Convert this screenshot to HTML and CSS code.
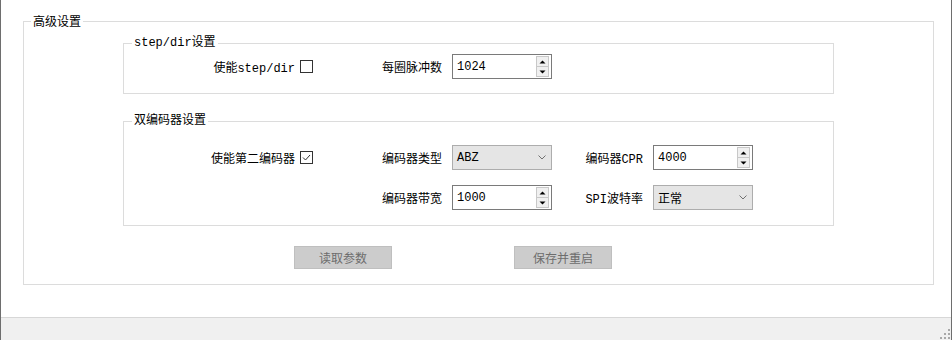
FILE: index.html
```html
<!DOCTYPE html>
<html lang="zh-CN">
<head>
  <meta charset="UTF-8">
  <meta name="viewport" content="width=device-width, initial-scale=1.0">
  <title>高级设置</title>
  <link rel="stylesheet" href="styles.css">
</head>
<body>
  <div class="window">
    <div class="main">
      <fieldset class="group outer">
        <legend>高级设置</legend>
        <div class="outer-body">

          <fieldset class="group sub sub-step">
            <legend>step/dir设置</legend>
            <div class="grid">
              <label class="lbl">使能step/dir</label>
              <div class="cell-check"><span class="check"></span></div>
              <label class="lbl">每圈脉冲数</label>
              <div class="cell-field">
                <div class="spin">
                  <span class="val">1024</span>
                  <span class="spin-btns">
                    <span class="sbtn"><svg width="7" height="4" viewBox="0 0 7 4"><path d="M3.5 0.5 L6.5 3.5 L0.5 3.5 Z" fill="#000"/></svg></span>
                    <span class="sbtn"><svg width="7" height="4" viewBox="0 0 7 4"><path d="M0.5 0.5 L6.5 0.5 L3.5 3.5 Z" fill="#000"/></svg></span>
                  </span>
                </div>
              </div>
            </div>
          </fieldset>

          <fieldset class="group sub sub-enc">
            <legend>双编码器设置</legend>
            <div class="grid">
              <label class="lbl">使能第二编码器</label>
              <div class="cell-check">
                <span class="check">
                  <svg width="11" height="11" viewBox="0 0 11 11"><path d="M2 5.5 L4.5 8 L9 3" fill="none" stroke="#333" stroke-width="1"/></svg>
                </span>
              </div>
              <label class="lbl">编码器类型</label>
              <div class="cell-field">
                <div class="combo"><span class="val">ABZ</span>
                  <svg class="chev" width="8" height="5" viewBox="0 0 8 5"><path d="M0.5 0.5 L4 4 L7.5 0.5" fill="none" stroke="#707070" stroke-width="1"/></svg>
                </div>
              </div>
              <label class="lbl">编码器CPR</label>
              <div class="cell-field">
                <div class="spin">
                  <span class="val">4000</span>
                  <span class="spin-btns">
                    <span class="sbtn"><svg width="7" height="4" viewBox="0 0 7 4"><path d="M3.5 0.5 L6.5 3.5 L0.5 3.5 Z" fill="#000"/></svg></span>
                    <span class="sbtn"><svg width="7" height="4" viewBox="0 0 7 4"><path d="M0.5 0.5 L6.5 0.5 L3.5 3.5 Z" fill="#000"/></svg></span>
                  </span>
                </div>
              </div>

              <label class="lbl col-3">编码器带宽</label>
              <div class="cell-field">
                <div class="spin">
                  <span class="val">1000</span>
                  <span class="spin-btns">
                    <span class="sbtn"><svg width="7" height="4" viewBox="0 0 7 4"><path d="M3.5 0.5 L6.5 3.5 L0.5 3.5 Z" fill="#000"/></svg></span>
                    <span class="sbtn"><svg width="7" height="4" viewBox="0 0 7 4"><path d="M0.5 0.5 L6.5 0.5 L3.5 3.5 Z" fill="#000"/></svg></span>
                  </span>
                </div>
              </div>
              <label class="lbl">SPI波特率</label>
              <div class="cell-field">
                <div class="combo"><span class="val cjk">正常</span>
                  <svg class="chev" width="8" height="5" viewBox="0 0 8 5"><path d="M0.5 0.5 L4 4 L7.5 0.5" fill="none" stroke="#707070" stroke-width="1"/></svg>
                </div>
              </div>
            </div>
          </fieldset>

          <div class="actions">
            <button disabled>读取参数</button>
            <button disabled>保存并重启</button>
          </div>
        </div>
      </fieldset>
    </div>
    <div class="status">
      <svg class="grip" width="12" height="12" viewBox="0 0 12 12">
        <rect x="9" y="1" width="2" height="2" fill="#a8a8a8"/>
        <rect x="5" y="5" width="2" height="2" fill="#a8a8a8"/>
        <rect x="9" y="5" width="2" height="2" fill="#a8a8a8"/>
        <rect x="1" y="9" width="2" height="2" fill="#a8a8a8"/>
        <rect x="5" y="9" width="2" height="2" fill="#a8a8a8"/>
        <rect x="9" y="9" width="2" height="2" fill="#a8a8a8"/>
      </svg>
    </div>
  </div>
</body>
</html>
```

FILE: styles.css
```css
* {
  box-sizing: border-box;
}
body {
  margin: 0;
  background-color: #fff;
  font-family: "Liberation Mono", "Noto Sans CJK SC", monospace;
  font-size: 12px;
  color: #000;
}
.window {
  width: 952px;
  height: 340px;
  display: flex;
  flex-direction: column;
  border-left: 1px solid #6e6e6e;
  border-right: 1px solid #6e6e6e;
}
.main {
  height: 317px;
  padding-top: 13px;
  background-color: #fff;
}
.status {
  height: 23px;
  border-top: 1px solid #d7d7d7;
  background-color: #f0f0f0;
  display: flex;
  justify-content: flex-end;
  align-items: flex-end;
}
.grip {
  display: block;
}

/* group boxes */
.group {
  margin: 0;
  padding: 0;
  min-width: 0;
  border: 1px solid #dcdcdc;
}
.group legend {
  padding: 0 2px;
  line-height: 16px;
  font-size: 12px;
}
.outer {
  width: 911px;
  margin-left: 22px;
}
.outer > legend {
  margin-left: 7px;
  font-family: "Noto Sans CJK SC", sans-serif;
}
.outer-body {
  padding: 6px 0 15px 99px;
}
.sub {
  width: 711px;
}
.sub > legend {
  margin-left: 8px;
}
.sub-step .grid {
  padding: 3px 0 14px;
}
.sub-enc {
  margin-top: 19px;
}
.sub-enc .grid {
  padding: 16px 0 15px;
}

/* form rows */
.grid {
  display: grid;
  grid-template-columns: 171px 18px 129px 110px 91px 110px;
  grid-auto-rows: 25px;
  row-gap: 15px;
  align-items: center;
}
.lbl {
  text-align: right;
  white-space: nowrap;
}
.col-3 {
  grid-column: 3;
}
.cell-check {
  padding-left: 5px;
  display: flex;
}
.check {
  width: 13px;
  height: 13px;
  border: 1px solid #333;
  background-color: #fff;
  display: flex;
}
.cell-field {
  padding-left: 10px;
}
.spin,
.combo {
  width: 100px;
  height: 25px;
  display: flex;
  align-items: center;
  justify-content: space-between;
}
.spin {
  border: 1px solid #7a7a7a;
  background-color: #fff;
  padding: 0 2px 0 4px;
}
.combo {
  border: 1px solid #adadad;
  background-color: #e5e5e5;
  padding: 0 5px 0 4px;
}
.val.cjk {
  font-family: "Noto Sans CJK SC", sans-serif;
}
.spin-btns {
  width: 13px;
  height: 21px;
  display: flex;
  flex-direction: column;
  border: 1px solid #c8c8c8;
  background-color: #f0f0f0;
}
.sbtn {
  flex: 1;
  display: flex;
  align-items: center;
  justify-content: center;
}
.sbtn + .sbtn {
  border-top: 1px solid #c8c8c8;
}
.chev {
  display: block;
}

/* buttons */
.actions {
  display: flex;
  gap: 122px;
  margin: 20px 0 0 171px;
}
button {
  width: 98px;
  height: 23px;
  padding: 0;
  background-color: #cccccc;
  border: 1px solid #bfbfbf;
  color: #6d6d6d;
  font-family: "Noto Sans CJK SC", sans-serif;
  font-size: 12px;
}
```
